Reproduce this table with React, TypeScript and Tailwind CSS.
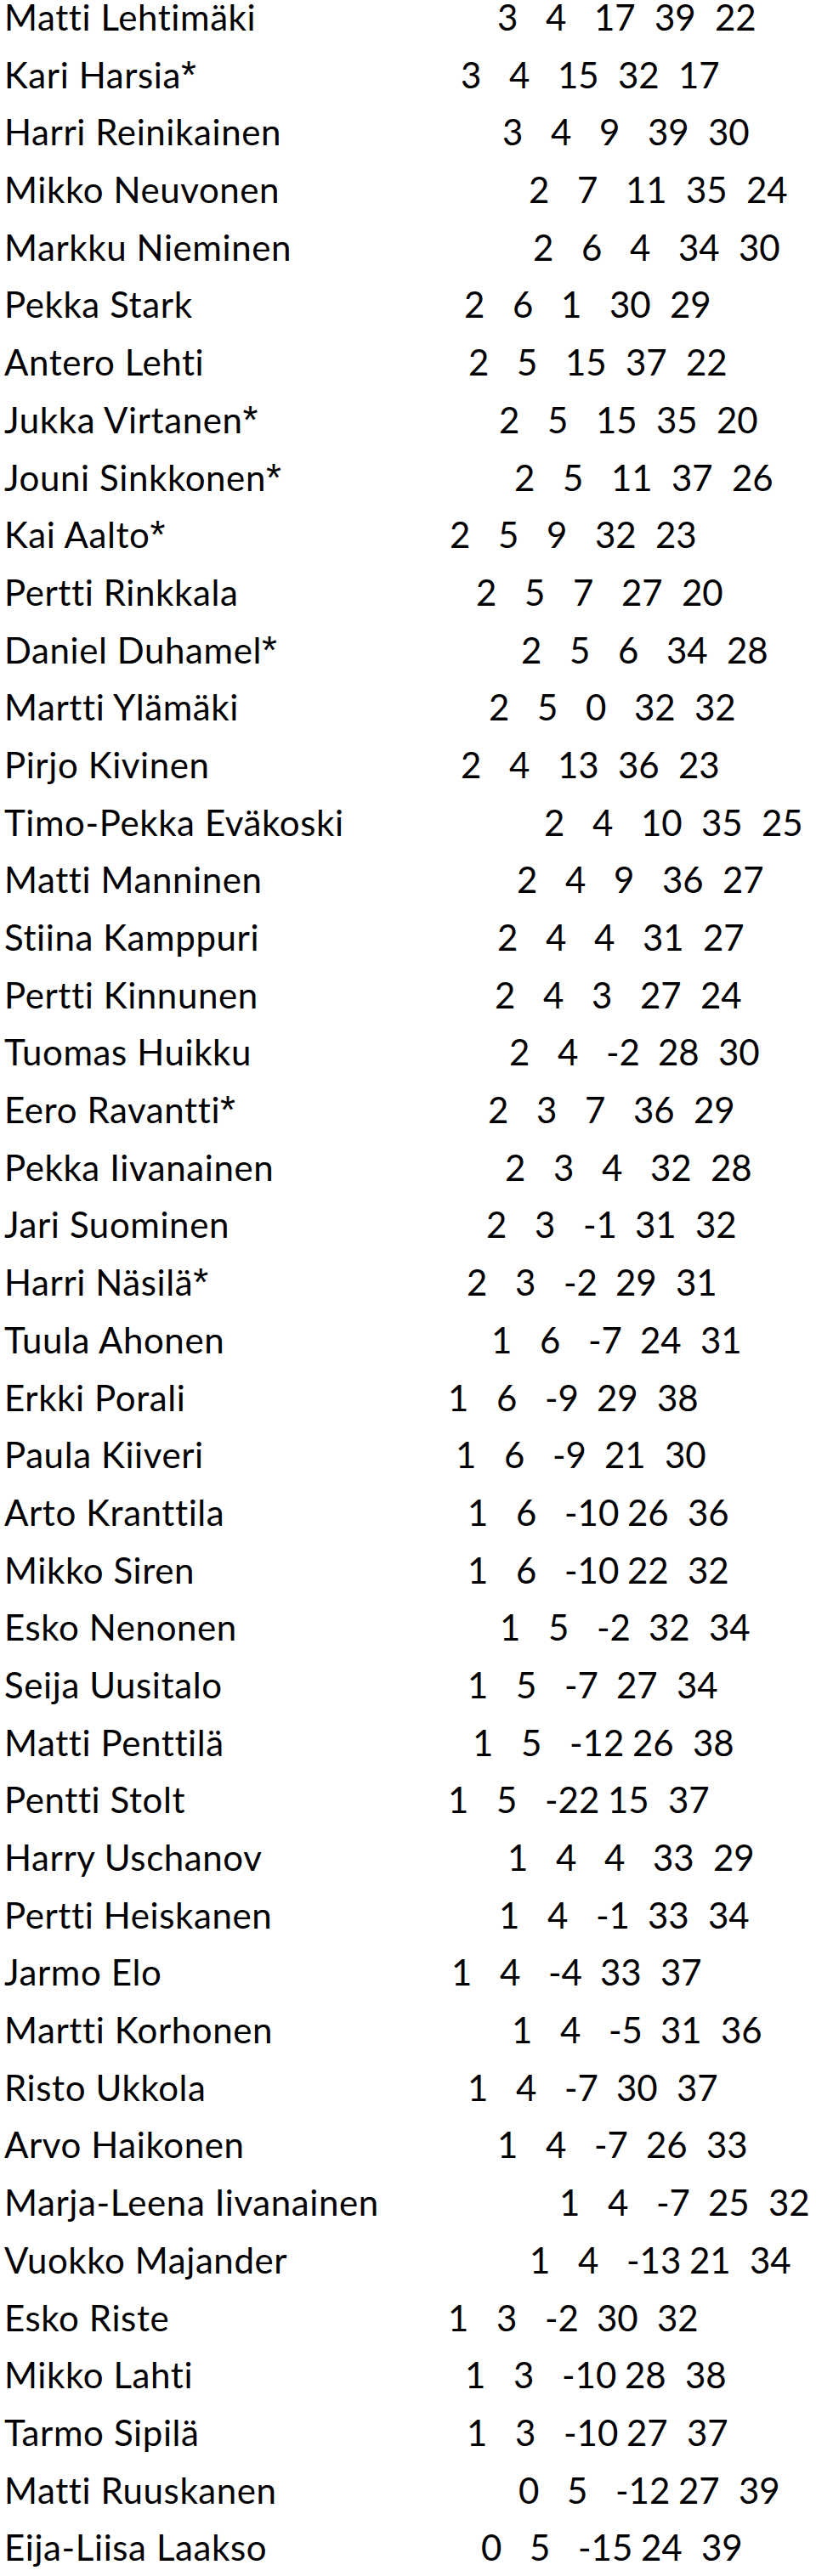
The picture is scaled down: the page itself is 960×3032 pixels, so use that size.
const ROWS: [string, string, number][] = [
  ["Matti Lehtimäki", "3 4 17 39 22", 588],
  ["Kari Harsia*", "3 4 15 32 17", 545],
  ["Harri Reinikainen", "3 4 9 39 30", 594],
  ["Mikko Neuvonen", "2 7 11 35 24", 625],
  ["Markku Nieminen", "2 6 4 34 30", 630],
  ["Pekka Stark", "2 6 1 30 29", 549],
  ["Antero Lehti", "2 5 15 37 22", 554],
  ["Jukka Virtanen*", "2 5 15 35 20", 590],
  ["Jouni Sinkkonen*", "2 5 11 37 26", 608],
  ["Kai Aalto*", "2 5 9 32 23", 532],
  ["Pertti Rinkkala", "2 5 7 27 20", 563],
  ["Daniel Duhamel*", "2 5 6 34 28", 616],
  ["Martti Ylämäki", "2 5 0 32 32", 578],
  ["Pirjo Kivinen", "2 4 13 36 23", 545],
  ["Timo-Pekka Eväkoski", "2 4 10 35 25", 643],
  ["Matti Manninen", "2 4 9 36 27", 611],
  ["Stiina Kamppuri", "2 4 4 31 27", 588],
  ["Pertti Kinnunen", "2 4 3 27 24", 585],
  ["Tuomas Huikku", "2 4 -2 28 30", 602],
  ["Eero Ravantti*", "2 3 7 36 29", 577],
  ["Pekka Iivanainen", "2 3 4 32 28", 597],
  ["Jari Suominen", "2 3 -1 31 32", 575],
  ["Harri Näsilä*", "2 3 -2 29 31", 552],
  ["Tuula Ahonen", "1 6 -7 24 31", 583],
  ["Erkki Porali", "1 6 -9 29 38", 532],
  ["Paula Kiiveri", "1 6 -9 21 30", 541],
  ["Arto Kranttila", "1 6 -10 26 36", 555],
  ["Mikko Siren", "1 6 -10 22 32", 555],
  ["Esko Nenonen", "1 5 -2 32 34", 593],
  ["Seija Uusitalo", "1 5 -7 27 34", 555],
  ["Matti Penttilä", "1 5 -12 26 38", 561],
  ["Pentti Stolt", "1 5 -22 15 37", 532],
  ["Harry Uschanov", "1 4 4 33 29", 602],
  ["Pertti Heiskanen", "1 4 -1 33 34", 592],
  ["Jarmo Elo", "1 4 -4 33 37", 536],
  ["Martti Korhonen", "1 4 -5 31 36", 607],
  ["Risto Ukkola", "1 4 -7 30 37", 555],
  ["Arvo Haikonen", "1 4 -7 26 33", 590],
  ["Marja-Leena Iivanainen", "1 4 -7 25 32", 663],
  ["Vuokko Majander", "1 4 -13 21 34", 628],
  ["Esko Riste", "1 3 -2 30 32", 532],
  ["Mikko Lahti", "1 3 -10 28 38", 552],
  ["Tarmo Sipilä", "1 3 -10 27 37", 554],
  ["Matti Ruuskanen", "0 5 -12 27 39", 613],
  ["Eija-Liisa Laakso", "0 5 -15 24 39", 569],
];

function fieldClass(t: string) {
  if (t.length === 1) return "w-[57px]";
  if (t.startsWith("-")) return t.length === 2 ? "w-[61px]" : "w-[74px]";
  return "w-[71px]";
}

function Name({ name }: { name: string }) {
  const star = name.endsWith("*");
  const base = star ? name.slice(0, -1) : name;
  return (
    <span className="col-start-1 row-start-1 pl-[5px] whitespace-nowrap tracking-[0.6px]">
      {base}
      {star && <span className="font-['Liberation_Sans',sans-serif] text-[46px]">*</span>}
    </span>
  );
}

export default function App() {
  return (
    <div className="bg-white text-black font-['Lato',sans-serif] text-[42px] leading-[41px] [font-variant-ligatures:none]">
      {ROWS.map(([name, nums, x]) => {
        const parts = nums.split(" ");
        return (
          <div key={name} className="grid h-[67.7px] items-start">
            <Name name={name} />
            <span
              className="col-start-1 row-start-1 flex whitespace-nowrap"
              style={{ paddingLeft: x - (nums.startsWith("1") ? 5 : 3) }}
            >
              {parts.map((p, i) => (
                <span key={i} className={i < parts.length - 1 ? fieldClass(p) : ""}>
                  {p}
                </span>
              ))}
            </span>
          </div>
        );
      })}
    </div>
  );
}
